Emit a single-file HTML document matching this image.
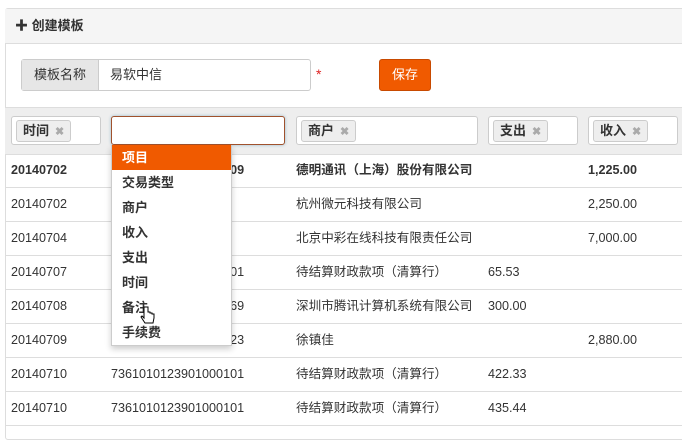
<html><head><style>
body{margin:0;width:682px;height:425px;overflow:hidden;background:#fff;font-family:"Liberation Sans","Noto Sans CJK SC",sans-serif;font-size:12px;color:#333}
.panel{position:absolute;left:5px;top:8px;width:690px;height:430px;border:1px solid #ddd;border-radius:3px;background:#fff}
.hd{position:absolute;left:5px;top:9px;width:690px;height:34px;background:#f5f5f5;border-bottom:1px solid #ddd;font-weight:bold;font-size:13px;line-height:34px}
.ig{position:absolute;left:21px;top:59px;width:288px;height:30px;border:1px solid #ccc;border-radius:3px;font-size:13px;line-height:30px}
.ig .l{position:absolute;left:0;top:0;width:76px;height:30px;background:#e6e6e6;border-right:1px solid #ccc;text-align:center;color:#333}
.btn{position:absolute;left:379px;top:59px;width:50px;height:30px;background:#f05a00;border:1px solid #c84a00;border-radius:3px;color:#fff;font-size:13px;line-height:30px;text-align:center}
.fr{position:absolute;left:5px;top:107px;width:690px;height:46px;background:#eee;border-top:1px solid #ddd;border-bottom:1px solid #ddd}
.fb{position:absolute;top:116px;height:27px;background:#fff;border:1px solid #ccc;border-radius:3px}
.tag{position:absolute;left:4px;top:3px;height:20px;padding:0 6px;background:#eee;border:1px solid #ccc;border-radius:3px;font-weight:bold;font-size:13px;line-height:20px}
.tag i{font-style:normal;color:#aaa;margin-left:6px;font-size:11px}
.row{position:absolute;left:5px;width:690px;height:33px;border-bottom:1px solid #ddd;line-height:33px;font-size:12.6px}
.row span{position:absolute}
.dd{position:absolute;left:111px;top:145px;width:119px;height:200px;background:#fff;border:1px solid #ccc;border-top:none;box-shadow:0 3px 6px rgba(0,0,0,.2);font-weight:bold;font-size:13px}
.dd div{height:25px;line-height:25px;padding-left:10px}
</style></head><body>
<div class="panel"></div>
<div class="hd"><span style="margin-left:10px">✚ 创建模板</span></div>
<div class="ig"><div class="l">模板名称</div><span style="position:absolute;left:88px">易软中信</span></div>
<span style="position:absolute;left:316px;top:66px;color:#d22;font-size:14px">*</span>
<div class="btn">保存</div>
<div class="fr"></div>
<div class="fb" style="left:11px;width:88px"><div class="tag">时间<i>✖</i></div></div>
<div class="fb" style="left:111px;width:172px;border-color:#a0522d;box-shadow:0 0 3px #9bc"></div>
<div class="fb" style="left:296px;width:180px"><div class="tag">商户<i>✖</i></div></div>
<div class="fb" style="left:488px;width:88px"><div class="tag">支出<i>✖</i></div></div>
<div class="fb" style="left:588px;width:88px"><div class="tag">收入<i>✖</i></div></div>

<div class="row" style="top:154px;font-weight:bold"><span style="left:6px">20140702</span><span style="left:106px">7361010123901000209</span><span style="left:291px">德明通讯（上海）股份有限公司</span><span style="left:583px">1,225.00</span></div>
<div class="row" style="top:188px"><span style="left:6px">20140702</span><span style="left:291px">杭州微元科技有限公司</span><span style="left:583px">2,250.00</span></div>
<div class="row" style="top:222px"><span style="left:6px">20140704</span><span style="left:291px">北京中彩在线科技有限责任公司</span><span style="left:583px">7,000.00</span></div>
<div class="row" style="top:256px"><span style="left:6px">20140707</span><span style="left:106px">7361010123901000101</span><span style="left:291px">待结算财政款项（清算行）</span><span style="left:483px">65.53</span></div>
<div class="row" style="top:290px"><span style="left:6px">20140708</span><span style="left:106px">7361010123977656269</span><span style="left:291px">深圳市腾讯计算机系统有限公司</span><span style="left:483px">300.00</span></div>
<div class="row" style="top:324px"><span style="left:6px">20140709</span><span style="left:106px">7361010123901000123</span><span style="left:291px">徐镇佳</span><span style="left:583px">2,880.00</span></div>
<div class="row" style="top:358px"><span style="left:6px">20140710</span><span style="left:106px">7361010123901000101</span><span style="left:291px">待结算财政款项（清算行）</span><span style="left:483px">422.33</span></div>
<div class="row" style="top:392px"><span style="left:6px">20140710</span><span style="left:106px">7361010123901000101</span><span style="left:291px">待结算财政款项（清算行）</span><span style="left:483px">435.44</span></div>

<div class="dd">
<div style="background:#f05a00;color:#fff">项目</div>
<div>交易类型</div><div>商户</div><div>收入</div><div>支出</div><div>时间</div><div>备注</div><div>手续费</div>
</div>
<svg style="position:absolute;left:140px;top:306px" width="16" height="22" viewBox="0 0 16 22"><path d="M4 1v11l-2-2-1 1 4 6h8l1-5v-4h-2v-1h-2v-1h-2V1z" fill="#fff" stroke="#000" stroke-width="1"/></svg>
</body></html>
